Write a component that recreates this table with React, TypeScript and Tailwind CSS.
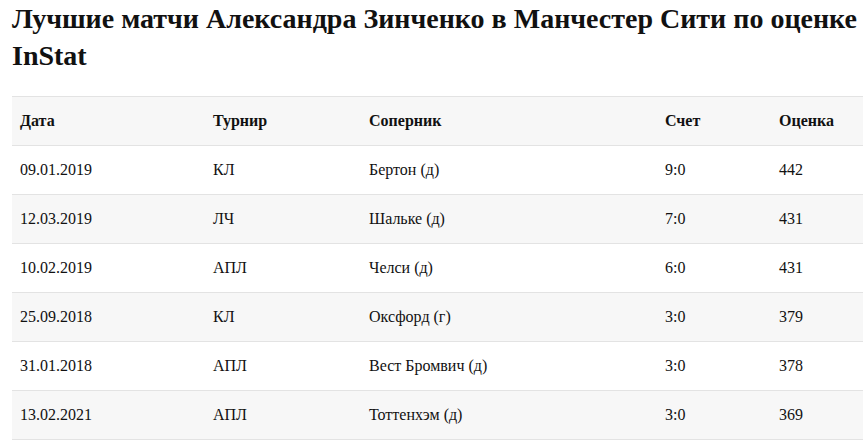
const rows = [
  ['09.01.2019', 'КЛ', 'Бертон (д)', '9:0', '442'],
  ['12.03.2019', 'ЛЧ', 'Шальке (д)', '7:0', '431'],
  ['10.02.2019', 'АПЛ', 'Челси (д)', '6:0', '431'],
  ['25.09.2018', 'КЛ', 'Оксфорд (г)', '3:0', '379'],
  ['31.01.2018', 'АПЛ', 'Вест Бромвич (д)', '3:0', '378'],
  ['13.02.2021', 'АПЛ', 'Тоттенхэм (д)', '3:0', '369'],
]

const headers = ['Дата', 'Турнир', 'Соперник', 'Счет', 'Оценка']
const widths = ['w-[193px]', 'w-[156px]', 'w-[296px]', 'w-[114px]', 'w-[92px]']

export default function App() {
  return (
    <div className="min-h-[442px] bg-white pl-3 text-[#111] font-['Liberation_Serif',serif]">
      <h2 className="text-[28px] font-bold leading-[37px]">
        Лучшие матчи Александра Зинченко в Манчестер Сити по оценке InStat
      </h2>
      <table className="mt-[22px] w-[851px] table-fixed border-collapse text-[16px]">
        <thead>
          <tr className="h-[49px] border-y border-[#e3e3e3] bg-[#f7f7f7]">
            {headers.map((h, i) => (
              <th key={h} className={`${widths[i]} px-2 text-left font-bold`}>
                {h}
              </th>
            ))}
          </tr>
        </thead>
        <tbody>
          {rows.map((r, i) => (
            <tr
              key={r[0]}
              className={`h-[49px] border-b border-[#e3e3e3] ${i % 2 === 1 ? 'bg-[#f7f7f7]' : 'bg-white'}`}
            >
              {r.map((c, j) => (
                <td key={j} className="px-2">
                  {c}
                </td>
              ))}
            </tr>
          ))}
        </tbody>
      </table>
    </div>
  )
}
